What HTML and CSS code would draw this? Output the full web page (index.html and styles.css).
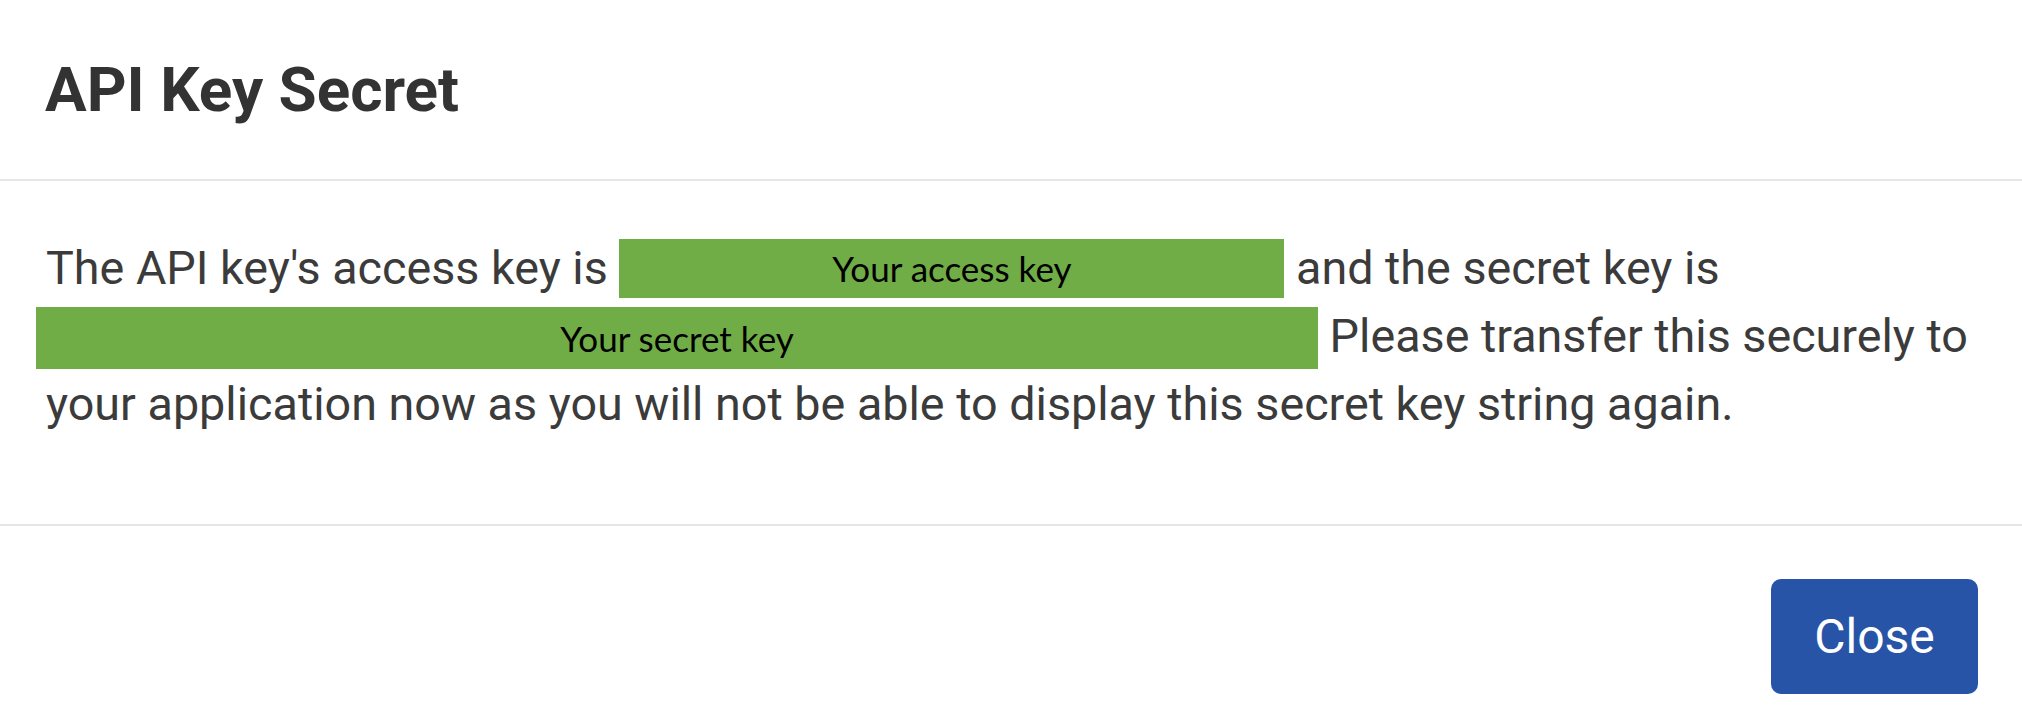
FILE: index.html
```html
<!DOCTYPE html>
<html lang="en">
<head>
<meta charset="utf-8">
<title>API Key Secret</title>
<link rel="stylesheet" href="styles.css">
</head>
<body>
<div class="dialog">
  <header class="dlg-header">
    <h1 class="dlg-title">API Key Secret</h1>
  </header>
  <section class="dlg-body">
    <p class="msg"><span class="seg">The API key's access key is</span> <span class="redact redact-access">Your access key</span> <span class="seg">and the secret key is</span> <span class="redact redact-secret">Your secret key</span> <span class="seg">Please transfer this securely to</span> <span class="seg">your application now as you will not be able to display this secret key string again.</span></p>
  </section>
  <footer class="dlg-footer">
    <button class="btn-close" type="button">Close</button>
  </footer>
</div>
</body>
</html>
```

FILE: styles.css
```css
html, body {
  margin: 0;
  padding: 0;
  background: #ffffff;
}

.dialog {
  width: 2022px;
  height: 716px;
  font-family: Roboto, "Liberation Sans", sans-serif;
}

.dlg-header {
  box-sizing: border-box;
  height: 181px;
  padding: 59px 45px 0;
  border-bottom: 2px solid #e6e6e6;
}

.dlg-title {
  margin: 0;
  font-size: 62px;
  line-height: 62px;
  font-weight: 700;
  color: #333333;
}

.dlg-body {
  box-sizing: border-box;
  height: 343px;
  padding: 53px 40px 0 46px;
}

.msg {
  margin: 0;
  font-size: 46.7px;
  line-height: 68px;
  font-weight: 400;
  color: #3b3b3b;
}

.redact {
  display: inline-block;
  background: #70ad47;
  color: #000000;
  font-family: Lato, "Open Sans", sans-serif;
  font-size: 35px;
  text-align: center;
  vertical-align: 2px;
}

.redact-access {
  width: 665px;
  height: 59px;
  line-height: 59px;
}

.redact-secret {
  width: 1282px;
  height: 62px;
  line-height: 62px;
  margin-left: -10px;
  vertical-align: 0;
}

.dlg-footer {
  box-sizing: border-box;
  height: 192px;
  padding: 53px 44px 0;
  border-top: 2px solid #e6e6e6;
  display: flex;
  justify-content: flex-end;
  align-items: flex-start;
}

.btn-close {
  width: 207px;
  height: 115px;
  padding: 0;
  border: none;
  border-radius: 10px;
  background: #2754a7;
  color: #ffffff;
  font-family: Roboto, "Liberation Sans", sans-serif;
  font-size: 48px;
  font-weight: 400;
}
```
